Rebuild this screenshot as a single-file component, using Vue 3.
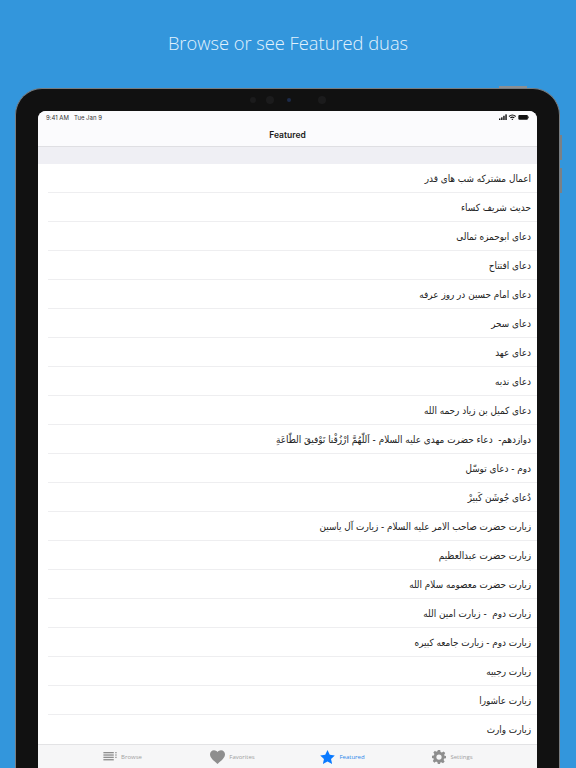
<script setup>
const duas = [
  'اعمال مشترکه شب های قدر',
  'حدیث شریف کساء',
  'دعای ابوحمزه ثمالی',
  'دعای افتتاح',
  'دعای امام حسین در روز عرفه',
  'دعای سحر',
  'دعای عهد',
  'دعای ندبه',
  'دعای کمیل بن زیاد رحمه الله',
  'دوازدهم-  دعاء حضرت مهدی علیه السلام - اَللّهُمَّ ارْزُقْنا تَوْفيقَ الطّاعَةِ',
  'دوم - دعای توسّل',
  'دُعای جُوشَن کَبیرْ',
  'زیارت حضرت صاحب الامر علیه السلام - زیارت آل یاسین',
  'زیارت حضرت عبدالعظیم',
  'زیارت حضرت معصومه سلام الله',
  'زیارت دوم  - زیارت امین الله',
  'زیارت دوم - زیارت جامعه کبیره',
  'زیارت رجبیه',
  'زیارت عاشورا',
  'زیارت وارث',
]
</script>

<template>
  <div class="page">
    <h1 class="headline">Browse or see Featured duas</h1>
    <div class="device">
      <span class="btn-top"></span>
      <span class="btn-side one"></span>
      <span class="btn-side two"></span>
      <div class="cameras">
        <i class="cam"></i><i class="cam big"></i><i class="cam lens"></i><i class="cam big far"></i>
      </div>
      <div class="screen">
        <div class="status">
          <span>9:41 AM&nbsp;&nbsp; Tue Jan 9</span>
          <svg class="status-icons" width="30" height="6.700" viewBox="0 0 27 6">
            <rect x="0" y="4" width="1.3" height="2" fill="#111" />
            <rect x="1.9" y="3" width="1.3" height="3" fill="#111" />
            <rect x="3.8" y="1.6" width="1.3" height="4.4" fill="#111" />
            <rect x="5.7" y="0.3" width="1.3" height="5.7" fill="#111" />
            <path d="M9 2.2a4.6 4.6 0 0 1 6 0M10.2 3.5a2.8 2.8 0 0 1 3.6 0" fill="none" stroke="#111" stroke-width="1" />
            <path d="M11.2 4.6 12 5.8l.8-1.2a1.2 1.2 0 0 0-1.6 0z" fill="#111" />
            <rect x="17.4" y="0.8" width="8.6" height="4.4" rx="1" fill="#111" />
            <rect x="26.2" y="2.2" width="0.8" height="1.6" fill="#555" />
          </svg>
        </div>
        <div class="nav">Featured</div>
        <div class="band"></div>
        <ul class="list">
          <li v-for="d in duas" :key="d" class="row" dir="rtl">{{ d }}</li>
        </ul>
        <div class="tabs">
          <div class="tab">
            <svg width="14" height="8.500" viewBox="0 0 14 9" fill="#8e8e8e">
              <rect x="0" y="0" width="11" height="1.4" /><rect x="0" y="2.5" width="11" height="1.4" />
              <rect x="0" y="5" width="11" height="1.4" /><rect x="0" y="7.5" width="11" height="1.4" />
              <rect x="12.6" y="0" width="1.4" height="1.4" /><rect x="12.6" y="2.5" width="1.4" height="1.4" />
              <rect x="12.6" y="5" width="1.4" height="1.4" />
            </svg>
            <span>Browse</span>
          </div>
          <div class="tab">
            <svg width="15" height="14" viewBox="0 0 24 22" fill="#8e8e8e">
              <path d="M12 22C5 16 0 12 0 6.5 0 2.8 2.8 0 6.4 0 8.6 0 10.8 1.1 12 3 13.2 1.1 15.4 0 17.6 0 21.200 0 24 2.800 24 6.500 24 12 19 16 12 22z" />
            </svg>
            <span>Favorites</span>
          </div>
          <div class="tab active">
            <svg width="15" height="14" viewBox="0 0 24 23" fill="#0a7aff">
              <path d="M12 0l3.700 8 8.300.900-6.200 5.700 1.800 8.400L12 18.700 4.400 23l1.800-8.400L0 8.900 8.300 8z" />
            </svg>
            <span>Featured</span>
          </div>
          <div class="tab">
            <svg width="14" height="14" viewBox="0 0 24 24" fill="#8e8e8e">
              <path fill-rule="evenodd" d="M10 0h4l.7 3.300 2.300 1 2.900-1.800 2.800 2.800-1.800 2.900 1 2.300L24 10v4l-3.100.7-1 2.300 1.800 2.900-2.800 2.800-2.900-1.800-2.300 1L14 24h-4l-.7-3.100-2.300-1-2.900 1.800-2.800-2.800L3.100 16l-1-2.300L0 14v-4l3.100-.7 1-2.300-1.800-2.900 2.800-2.800L7 3.100l2.300-1zM12 7.500a4.500 4.500 0 1 0 0 9 4.500 4.500 0 0 0 0-9z" />
            </svg>
            <span>Settings</span>
          </div>
        </div>
      </div>
    </div>
  </div>
</template>

<style scoped>
.page {
  width: 576px;
  height: 768px;
  overflow: hidden;
  background: #3396dc;
  font-family: "Open Sans", "Liberation Sans", sans-serif;
}
.headline {
  margin: 0;
  height: 88px;
  padding-top: 30px;
  box-sizing: border-box;
  text-align: center;
  font-size: 18.300px;
  line-height: 25px;
  font-weight: 300;
  color: #e2f2fd;
}
.device {
  position: relative;
  width: 545px;
  height: 680px;
  margin-left: 15px;
  box-sizing: border-box;
  padding: 0 22px;
  background: #111;
  border: 1px solid #777c80;
  border-bottom: 0;
  border-radius: 27px 27px 0 0;
}
.btn-top {
  position: absolute;
  top: -3px;
  right: 32px;
  width: 28px;
  height: 2px;
  background: #8a8f94;
}
.btn-side {
  position: absolute;
  right: -3px;
  width: 2px;
  background: #7b8085;
}
.btn-side.one { top: 46px; height: 25px; }
.btn-side.two { top: 79px; height: 25px; }
.cameras {
  height: 22px;
  display: flex;
  align-items: center;
  padding-left: 212px;
  gap: 10px;
}
.cam {
  width: 6px;
  height: 6px;
  border-radius: 50%;
  background: #1b1b1c;
}
.cam.big { width: 8px; height: 8px; }
.cam.lens { width: 4px; height: 4px; background: #1d2b4a; margin-left: 3px; }
.cam.far { margin-left: 17px; }
.screen {
  height: 657px;
  display: flex;
  flex-direction: column;
  overflow: hidden;
  background: #fff;
  border-radius: 8px 8px 0 0;
}
.status {
  height: 12px;
  flex: none;
  display: flex;
  justify-content: space-between;
  align-items: center;
  padding: 0 8px;
  background: #fbfbfd;
  font-family: Inter, "Liberation Sans", sans-serif;
  font-size: 6px;
  color: #333;
}
.status-icons { display: block; }
.nav {
  height: 24px;
  flex: none;
  box-sizing: border-box;
  background: #fbfbfd;
  border-bottom: 1px solid #dfdfe3;
  text-align: center;
  line-height: 24px;
  font-family: Inter, "Liberation Sans", sans-serif;
  font-size: 8.500px;
  font-weight: 600;
  color: #1a1a1a;
}
.band {
  height: 17px;
  flex: none;
  background: #efeff4;
}
.list {
  list-style: none;
  margin: 0;
  padding: 0 0 0 10px;
  flex: 1;
  min-height: 0;
  overflow: hidden;
  background: #fff;
}
.row {
  height: 29px;
  box-sizing: border-box;
  padding-right: 6px;
  border-bottom: 1px solid #eeeef0;
  font-family: "DejaVu Sans", sans-serif;
  font-stretch: condensed;
  font-size: 9.900px;
  line-height: 29px;
  white-space: pre;
  color: #222;
}
.row:last-child { border-bottom: 0; }
.tabs {
  height: 24px;
  flex: none;
  box-sizing: border-box;
  display: flex;
  justify-content: center;
  align-items: center;
  background: #f6f6f7;
  border-top: 1px solid #e3e3e5;
}
.tab {
  width: 110px;
  display: flex;
  justify-content: center;
  align-items: center;
  gap: 4px;
  font-size: 6px;
  color: #a0a0a0;
}
.tab.active { color: #2a86ea; }
</style>
